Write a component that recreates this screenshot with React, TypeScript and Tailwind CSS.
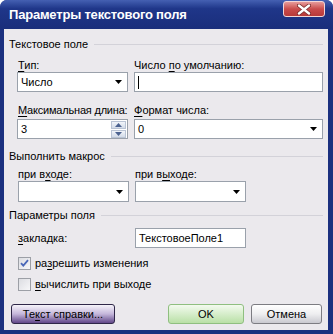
import React from 'react';

const font = "font-['Liberation_Sans',Arial,sans-serif]";

function U({ children }: { children: React.ReactNode }) {
  return <span className="underline underline-offset-[2px] decoration-[1px]">{children}</span>;
}

function Arrow() {
  return (
    <svg width="7" height="4" viewBox="0 0 7 4" className="shrink-0">
      <path d="M0 0h7L3.5 4z" fill="#000" />
    </svg>
  );
}

function GroupHeader({ title }: { title: string }) {
  return (
    <div className="flex items-center h-[13px] leading-[13px]">
      <span className="text-[11px] text-black">{title}</span>
      <div className="flex-1 h-px bg-[#d3d2d9] ml-[6px]" />
    </div>
  );
}

function Select({ value, className }: { value?: string; className?: string }) {
  return (
    <div
      className={`h-[20px] border border-[#9aa1ab] bg-white flex items-center justify-between pl-[3px] pr-[5px] text-[11px] ${className ?? ''}`}
    >
      <span>{value}</span>
      <Arrow />
    </div>
  );
}

function SpinArrow({ up }: { up?: boolean }) {
  return (
    <svg width="7" height="4" viewBox="0 0 7 4">
      <path d={up ? 'M0 4h7L3.5 0z' : 'M0 0h7L3.5 4z'} fill="#4c6290" />
    </svg>
  );
}

function Checkbox({ checked }: { checked?: boolean }) {
  return (
    <div className="w-[13px] h-[13px] border border-[#9c9fa6] bg-gradient-to-br from-[#dcdde2] to-[#f7f7f9] flex items-center justify-center shrink-0">
      {checked && (
        <svg width="9" height="9" viewBox="0 0 9 9">
          <path d="M1 4.2 3.3 6.6 8 1.2" fill="none" stroke="#4a68b8" strokeWidth="1.8" />
        </svg>
      )}
    </div>
  );
}

export default function App() {
  return (
    <div className={`w-[333px] h-[334px] bg-white ${font}`}>
      <div className="w-[333px] h-[334px] flex flex-col rounded-t-[7px] bg-[#1b307f] overflow-hidden">
        {/* title bar */}
        <div className="h-[29px] shrink-0 flex items-center justify-between pl-[9px] pr-[8px] bg-gradient-to-b from-[#4560b2] via-[#1f3689] via-30% to-[#1a2e7b]">
          <span className="text-white font-bold text-[13px] tracking-[-0.2px] mt-[1px]">Параметры текстового поля</span>
          <div className="w-[42px] h-[16px] mb-[11px] rounded-[3px] border border-[#f3d6d6] bg-gradient-to-b from-[#e69a9a] via-[#c94b4b] to-[#b83a3a] flex items-center justify-center">
            <svg width="14" height="11" viewBox="0 0 14 11">
              <path d="M2 1.5 12 9.5M12 1.5 2 9.5" stroke="#7a2a2a" strokeWidth="4" strokeLinecap="round" />
              <path d="M2 1.5 12 9.5M12 1.5 2 9.5" stroke="#fff" strokeWidth="2.4" strokeLinecap="round" />
            </svg>
          </div>
        </div>

        {/* body */}
        <div className="flex-1 ml-[4px] mr-[5px] mb-[4px] bg-[#ebe9ed] pl-[5px] pr-[5px] pt-[9px] text-[11px] leading-[13px] text-black flex flex-col whitespace-nowrap">
          <GroupHeader title="Текстовое поле" />
          <div className="pl-[8px] mt-[8px]">
            <div className="flex">
              <div className="w-[111px] pl-[1px]"><U>Т</U>ип:</div>
              <div className="ml-[6px]">Число <U>п</U>о умолчанию:</div>
            </div>
            <div className="flex">
              <Select value="Число" className="w-[111px]" />
              <div className="ml-[6px] flex-1 h-[20px] border border-[#9aa1ab] bg-white flex items-center pl-[3px]">
                <div className="w-px h-[13px] bg-black" />
              </div>
            </div>
            <div className="flex mt-[12px]">
              <div className="w-[111px] pl-[1px] tracking-[-0.2px]"><U>М</U>аксимальная длина:</div>
              <div className="ml-[6px]"><U>Ф</U>ормат числа:</div>
            </div>
            <div className="flex mt-[2px]">
              <div className="w-[111px] h-[20px] border border-[#9aa1ab] bg-white flex items-center justify-between pl-[3px] pr-px">
                <span>3</span>
                <div className="flex flex-col gap-px">
                  <div className="w-[15px] h-[8px] border border-[#b9c3d4] bg-gradient-to-b from-[#f2f5fa] to-[#d3dbe8] flex items-center justify-center">
                    <SpinArrow up />
                  </div>
                  <div className="w-[15px] h-[8px] border border-[#b9c3d4] bg-gradient-to-b from-[#f2f5fa] to-[#d3dbe8] flex items-center justify-center">
                    <SpinArrow />
                  </div>
                </div>
              </div>
              <Select value="0" className="ml-[6px] flex-1" />
            </div>
          </div>

          <div className="mt-[11px]">
            <GroupHeader title="Выполнить макрос" />
          </div>
          <div className="pl-[9px] mt-[5px]">
            <div className="flex">
              <div className="w-[111px]">при в<U>х</U>оде:</div>
              <div className="ml-[6px]">при в<U>ы</U>ходе:</div>
            </div>
            <div className="flex">
              <Select className="w-[111px] h-[21px]" />
              <Select className="w-[111px] h-[21px] ml-[6px]" />
            </div>
          </div>

          <div className="mt-[7px]">
            <GroupHeader title="Параметры поля" />
          </div>
          <div className="pl-[9px] mt-[6px]">
            <div className="flex items-center">
              <div className="w-[111px]"><U>з</U>акладка:</div>
              <div className="ml-[6px] w-[111px] h-[20px] border border-[#9aa1ab] bg-white flex items-center pl-[3px]">
                ТекстовоеПоле1
              </div>
            </div>
            <div className="flex items-center mt-[9px] gap-[4px]">
              <Checkbox checked />
              <span>ра<U>з</U>решить изменения</span>
            </div>
            <div className="flex items-center mt-[8px] gap-[4px]">
              <Checkbox />
              <span><U>в</U>ычислить при выходе</span>
            </div>
          </div>

          <div className="flex mt-[13px] pl-[2px] pr-px">
            <div className="w-[104px] h-[20px] rounded-[3px] border border-[#2f2748] bg-gradient-to-b from-[#f6f4fa] via-[#c4b6da] to-[#634889] flex items-center justify-center">
              Те<U>к</U>ст справки...
            </div>
            <div className="flex-1" />
            <div className="w-[76px] h-[20px] rounded-[3px] border border-[#8fbf80] bg-gradient-to-b from-[#f3faef] to-[#b9e0a6] flex items-center justify-center">
              OK
            </div>
            <div className="w-[71px] h-[20px] ml-[7px] rounded-[3px] border border-[#7c7c82] bg-gradient-to-b from-[#ffffff] via-[#eeeef0] to-[#c9c9d0] flex items-center justify-center">
              Отмена
            </div>
          </div>
        </div>
      </div>
    </div>
  );
}
